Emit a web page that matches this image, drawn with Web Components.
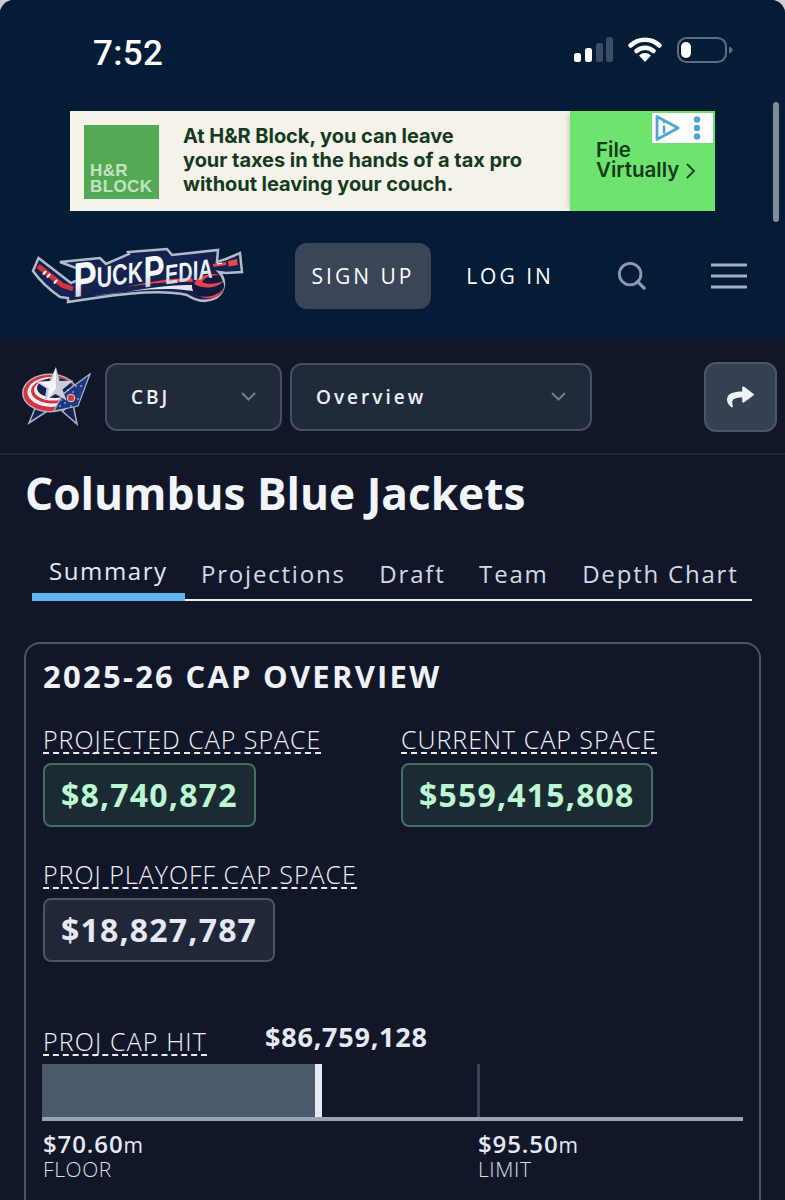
<!DOCTYPE html>
<html lang="en">
<head>
<meta charset="utf-8">
<title>Columbus Blue Jackets</title>
<style>
    html, body {
        margin: 0;
        height: 1200px;
        overflow: hidden;
        background: #c9ccd2;
    }
    body {
        font-family: "Open Sans", "Liberation Sans", sans-serif;
        color: #e5e9f2;
    }
    #app {
        display: block;
        height: 1200px;
        overflow: hidden;
        border-radius: 14px 14px 0 0;
        background: #111729;
    }
</style>
</head>
<body>
<div id="app">
    <top-section>
        <status-bar></status-bar>
        <ad-banner></ad-banner>
        <site-header></site-header>
    </top-section>
    <team-bar></team-bar>
    <team-title>Columbus Blue Jackets</team-title>
    <team-tabs></team-tabs>
    <cap-card>
        <cap-row>
            <cap-stat label="PROJECTED CAP SPACE" tone="good">$8,740,872</cap-stat>
            <cap-stat label="CURRENT CAP SPACE" tone="good">$559,415,808</cap-stat>
        </cap-row>
        <cap-row>
            <cap-stat label="PROJ PLAYOFF CAP SPACE">$18,827,787</cap-stat>
        </cap-row>
        <cap-meter></cap-meter>
    </cap-card>
</div>

<script>
const define = (name, html) => {
    customElements.define(name, class extends HTMLElement {
        constructor() {
            super();
            this.attachShadow({ mode: "open" }).innerHTML = html;
        }
    });
};

define("top-section", `
    <style>
    :host { display: block; position: relative; height: 338px; background: #041c36; }
    .scroll { position: absolute; left: 773px; top: 102px; width: 6px; height: 120px; border-radius: 3px; background: #7f8a9b; }
    </style>
    <slot></slot>
    <div class="scroll"></div>
`);

define("status-bar", `
    <style>
    :host { display: flex; height: 111px; box-sizing: border-box; padding: 34px 51px 0 93px; justify-content: space-between; align-items: flex-start; }
    .time { font: 500 35px/40px Roboto, sans-serif; color: #fff; letter-spacing: 0.3px; }
    svg { display: block; margin-top: 1px; }
    </style>
    <span class="time">7:52</span>
    <svg width="160" height="30" viewBox="574 37 160 30">
        <rect x="574" y="55" width="7" height="9" rx="2.5" fill="#fff"/>
        <rect x="585" y="50" width="7" height="14" rx="2.5" fill="#fff"/>
        <rect x="596" y="45" width="7" height="19" rx="2.5" fill="#3c4c62"/>
        <rect x="606" y="39" width="7" height="25" rx="2.5" fill="#3c4c62"/>
        <path d="M630.5 47.5a21 21 0 0 1 29 0" fill="none" stroke="#fff" stroke-width="4.5" stroke-linecap="round"/>
        <path d="M636.5 53a12.5 12.5 0 0 1 17 0" fill="none" stroke="#fff" stroke-width="4.5" stroke-linecap="round"/>
        <path d="M645 64l-6-6.5a8.5 8.5 0 0 1 12 0z" fill="#fff"/>
        <rect x="678" y="40" width="48" height="24" rx="8.5" fill="none" stroke="#5d6c83" stroke-width="2"/>
        <rect x="681" y="44" width="10" height="16" rx="5" fill="#fff"/>
        <path d="M729 48.5c2.5.8 3.5 2 3.5 3.5s-1 2.700-3.500 3.500z" fill="#5d6c83"/>
    </svg>
`);

define("ad-banner", `
    <style>
    :host { display: flex; position: relative; width: 645px; height: 100px; margin-left: 70px; background: #f5f2ea; color: #143a1e; font-family: Inter, sans-serif; }
    .logo { width: 75px; height: 74px; margin: 14px 24px 0 14px; box-sizing: border-box; padding: 0 0 4px 6px; background: #55a955; color: #c4e2c4; font: 700 17px/16px "Liberation Sans", sans-serif; letter-spacing: 0.4px; display: flex; flex-direction: column; justify-content: flex-end; }
    .copy { flex: 1; padding-top: 13px; font-size: 20px; font-weight: 700; line-height: 24px; letter-spacing: -0.05px; white-space: nowrap; }
    .cta { width: 145px; box-sizing: border-box; padding: 29px 0 0 26px; background: #6ce46e; box-shadow: -4px 0 5px -3px rgba(60, 50, 30, .25); font-size: 20.5px; font-weight: 600; line-height: 20px; white-space: nowrap; }
    .cta svg { margin-left: 7px; vertical-align: -2px; }
    .choice { position: absolute; right: 2px; top: 2px; width: 61px; height: 30px; background: #fff; display: flex; }
    </style>
    <div class="logo"><span>H&amp;R</span><span>BLOCK</span></div>
    <div class="copy">At H&amp;R Block, you can leave<br>your taxes in the hands of a tax pro<br>without leaving your couch.</div>
    <div class="cta">File<br>Virtually<svg width="9" height="16" viewBox="0 0 9 16"><path d="M1 1l7 7-7 7" fill="none" stroke="#143a1e" stroke-width="1.800"/></svg></div>
    <div class="choice">
        <svg width="61" height="30" viewBox="0 0 61 30">
            <path d="M5 3.500v23L26 15z" fill="none" stroke="#4fa5d0" stroke-width="2.800" stroke-linejoin="round"/>
            <path d="M12 12.500v8M12 8.500v1.800" fill="none" stroke="#4fa5d0" stroke-width="2.500"/>
            <circle cx="45" cy="6.500" r="3.200" fill="#4fa5d0"/><circle cx="45" cy="15" r="3.200" fill="#4fa5d0"/><circle cx="45" cy="23.500" r="3.200" fill="#4fa5d0"/>
        </svg>
    </div>
`);

define("site-header", `
    <style>
    :host { display: flex; align-items: center; height: 66px; margin-top: 32px; padding-left: 32px; color: #fff; }
    .brand { display: block; width: 211px; height: 56px; margin-right: 52px; flex: none; overflow: visible; }
    .btn { box-sizing: border-box; height: 66px; display: flex; align-items: center; justify-content: center; font-size: 21px; font-weight: 400; letter-spacing: 3px; border-radius: 12px; white-space: nowrap; }
    .signup { width: 136px; background: #3a4558; }
    .login { width: 86px; margin-left: 36px; }
    .search { margin-left: 65px; display: block; }
    .menu { margin-left: 65px; display: block; }
    </style>
    <svg class="brand" viewBox="32 248 211 56">
        <defs>
            <linearGradient id="steel" x1="0" y1="0" x2="0" y2="1">
                <stop offset="0" stop-color="#fff"/><stop offset=".6" stop-color="#f4f5f8"/><stop offset="1" stop-color="#aab2c0"/>
            </linearGradient>
        </defs>
        <path d="M33 271L38.500 258 71 283 78 280 79 269 60 262 100 258 106 264 129 254 128 252 167 249 172 255 218 250 217 262 226 259 240 253 242 272 226 273 219 272C226 279 226 291 216 298 206 303 196 301 187 295 170 291 140 291 95 298L68 302 68 298 60 297C50 290 40 281 33 271z" fill="#14224f" stroke="#b4bbc8" stroke-width="2.500" stroke-linejoin="miter"/>
        <path d="M38 266L62 285 73 289" fill="none" stroke="#d8323c" stroke-width="5"/>
        <path d="M46 271l-3 3.500M50 274l-3 3.500M57 280l-3 3.500" stroke="#fff" stroke-width="2"/>
        <path d="M213 264l13-2 .3 3-13 2zM228 261l9-2 .6 6-9 1.500z" fill="#e8474f"/>
        <path d="M217 264l5-.8" stroke="#fff" stroke-width="1.200"/>
        <path d="M92 296c32-2 66-12 100-11l1 6c-30-5-60 0-101 5z" fill="#e6e6ec"/>
        <path d="M126 287c22-5 44-9 66-9l1 4c-24-1-44 2-67 5z" fill="#e5424c"/>
        <ellipse cx="208" cy="286" rx="16" ry="12.500" fill="#0e1a3f"/>
        <path d="M194 284c2-6 10-10 20-10 2 0 4 .3 5 1-8 0-15 3-17 7 5 3 14 2 21-1-4 7-19 9-29 3zM199 296c8 2 18 0 24-7-1 7-13 13-24 7z" fill="#e5424c"/>
        <text transform="rotate(-8 75 297)" x="75" y="297" font-family="Liberation Sans, sans-serif" font-weight="700" font-style="italic" fill="url(#steel)" textLength="140" lengthAdjust="spacingAndGlyphs"><tspan font-size="48">P</tspan><tspan font-size="29" dy="-6">UCK</tspan><tspan font-size="43" dy="6">P</tspan><tspan font-size="27">EDIA</tspan></text>
    </svg>
    <span class="btn signup">SIGN UP</span>
    <span class="btn login">LOG IN</span>
    <svg class="search" width="28" height="28" viewBox="0 0 30 30"><circle cx="13" cy="13" r="11.500" fill="none" stroke="#8e9bb3" stroke-width="3"/><path d="M21 21l7 7" stroke="#8e9bb3" stroke-width="3.500" stroke-linecap="round"/></svg>
    <svg class="menu" width="36" height="26" viewBox="0 0 36 26"><path d="M0 2h36M0 13h36M0 24h36" stroke="#a3aec2" stroke-width="3"/></svg>
`);

define("team-select", `
    <style>
    :host { display: flex; box-sizing: border-box; height: 68px; align-items: center; justify-content: space-between; padding: 0 24px 0 24px; border: 2px solid #465063; border-radius: 12px; background: #212a3b; color: #eef1f6; font-size: 19px; font-weight: 600; letter-spacing: 3px; }
    svg { display: block; margin-bottom: 2px; }
    </style>
    <slot></slot>
    <svg width="15" height="9" viewBox="0 0 15 9"><path d="M1 1l6.500 6.500L14 1" fill="none" stroke="#6f7c91" stroke-width="2"/></svg>
`);

define("team-bar", `
    <style>
    :host { display: flex; box-sizing: border-box; height: 117px; padding: 24px 8px 0 22px; align-items: flex-start; border-bottom: 2px solid #1f2739; }
    .crest { display: block; width: 69px; height: 60px; margin: 4px 14px 0 0; flex: none; }
    .team { width: 177px; margin-top: 1px; }
    .view { width: 302px; margin: 1px 0 0 8px; }
    .share { display: flex; box-sizing: border-box; width: 73px; height: 70px; margin-left: auto; align-items: center; justify-content: center; background: #354052; border: 2px solid #4b5668; border-radius: 12px; }
    </style>
    <svg class="crest" viewBox="22 365 69 60">
        <path d="M36 405L29 422 46 411zM62 410L77 423 73 403z" fill="#14224f" stroke="#aeb6c4" stroke-width="1.500"/>
        <ellipse cx="50" cy="392" rx="28" ry="19.500" fill="#aeb6c4"/>
        <ellipse cx="50" cy="392" rx="26.500" ry="18" fill="#d7333d"/>
        <ellipse cx="51" cy="391" rx="23.500" ry="15" fill="#eef0f4"/>
        <ellipse cx="52" cy="390" rx="21" ry="12.500" fill="#d7333d"/>
        <ellipse cx="53" cy="389" rx="19" ry="10.500" fill="#eef0f4"/>
        <ellipse cx="55" cy="387" rx="18" ry="10" fill="#14224f"/>
        <path d="M90 373L78 405 54 410 62 394 72 386z" fill="#1c3a7d" stroke="#aeb6c4" stroke-width="1.200"/>
        <circle cx="71" cy="397" r="3.800" fill="#d7333d" stroke="#fff" stroke-width=".8"/>
        <path d="M65 402h.1M61 399h.1M68 389h.1M76 385h.1M81 385h.1M78 398h.1M60 405h.1M71 405h.1M73 391h.1" stroke="#dfe4ee" stroke-width="1.500" stroke-linecap="round"/>
        <path d="M56 366l3.500 14 14-.5-11 9 4 11-11-6.500-11 6.500 2-12-10-6.500 13-1z" fill="#c8cdd7"/>
        <path d="M56 366v21l-9 12.500 2-12-10-6.500 13-1z" fill="#f4f5f8"/>
    </svg>
    <team-select class="team">CBJ</team-select>
    <team-select class="view">Overview</team-select>
    <div class="share">
        <svg width="27" height="24" viewBox="0 0 512 512" preserveAspectRatio="none"><path fill="#eef1f6" d="M503.691 189.836L327.687 37.851C312.281 24.546 288 35.347 288 56.015v80.053C127.371 137.907 0 170.1 0 322.326c0 61.441 39.581 116.037 83.804 148.204 13.799 10.037 33.466-2.56 28.378-18.831-45.826-146.551 21.739-185.467 175.818-187.686V352c0 20.7 24.3 31.453 39.687 18.164l176.004-152c11.071-9.562 11.086-26.753 0-36.328z"/></svg>
    </div>
`);

define("team-title", `
    <style>
    :host { display: block; padding: 10px 0 0 25px; font-size: 44.200px; font-weight: 700; line-height: 56px; color: #f1f4f9; white-space: nowrap; }
    </style>
    <slot></slot>
`);

define("team-tabs", `
    <style>
    :host { display: flex; height: 54px; margin: 24px 33px 0 32px; border-bottom: 2px solid #e8ebf0; color: #d3d9e6; font-size: 24px; letter-spacing: 1.800px; }
    span { flex: none; padding: 11px 16.800px 0; line-height: 36px; white-space: nowrap; }
    span:last-child { padding-right: 0; }
    .on { box-sizing: border-box; width: 153px; height: 56px; padding: 8px 0 0 17px; margin-bottom: -2px; border-bottom: 8px solid #5fb6f5; color: #e5e9f2; letter-spacing: 1.600px; }
    .first { padding-left: 16px; }
    </style>
    <span class="on">Summary</span>
    <span class="first">Projections</span>
    <span>Draft</span>
    <span>Team</span>
    <span>Depth Chart</span>
`);

define("cap-card", `
    <style>
    :host { display: block; box-sizing: border-box; width: 737px; height: 640px; margin: 41px 0 0 24px; padding: 11px 17px 0; border: 2px solid #4b5563; border-radius: 16px; }
    h2 { margin: 0 0 -5px; font-size: 31px; font-weight: 700; line-height: 42px; letter-spacing: 2.250px; color: #eef1f6; white-space: nowrap; }
    </style>
    <h2>2025-26 CAP OVERVIEW</h2>
    <slot></slot>
`);

define("cap-row", `
    <style>
    :host { display: flex; margin-top: 36px; }
    ::slotted(cap-stat:first-child) { width: 358px; }
    </style>
    <slot></slot>
`);

customElements.define("cap-stat", class extends HTMLElement {
    constructor() {
        super();
        this.attachShadow({ mode: "open" }).innerHTML = `
            <style>
            :host { display: block; }
            .label { display: table; box-sizing: content-box; padding-bottom: 1px; font-size: 25px; font-weight: 300; line-height: 23px; letter-spacing: 1px; color: #f1f3f7; border-bottom: 2px dashed #e8ebf0; white-space: nowrap; }
            .pill { display: table; box-sizing: border-box; height: 64px; margin-top: 9px; padding: 0 16px; border: 2px solid #4b5563; border-radius: 8px; background: #1f2739; color: #e5e9f2; font-size: 32px; font-weight: 700; line-height: 60px; letter-spacing: 1.200px; }
            :host([tone="good"]) .pill { background: #1c2b33; border-color: #41705c; color: #bbf7d0; }
            </style>
            <div class="label"></div>
            <div class="pill"><slot></slot></div>
        `;
        this.shadowRoot.querySelector(".label").textContent = this.getAttribute("label");
    }
});

define("cap-meter", `
    <style>
    :host { display: block; margin: 57px 0 0 -1px; width: 701px; }
    .head { display: flex; align-items: flex-end; height: 37px; padding-left: 1px; }
    .label { padding-bottom: 1px; font-size: 25px; font-weight: 300; line-height: 23px; letter-spacing: 1.150px; color: #f1f3f7; border-bottom: 2px dashed #e8ebf0; white-space: nowrap; }
    .total { margin: 0 0 4px 58px; font-size: 27px; font-weight: 700; line-height: 30px; letter-spacing: 0.750px; color: #e5e9f2; }
    .bar { display: flex; height: 53px; margin-top: 8px; border-bottom: 4px solid #98a2b6; }
    .fill { width: 273px; background: #4c596c; }
    .now { width: 7px; background: #e5e9f2; }
    .limit { width: 3px; margin-left: 155px; background: #364257; }
    .ends { display: grid; grid-template-columns: 435px 1fr; margin: 9px 0 0 1px; }
    .num { font-size: 24px; font-weight: 600; line-height: 28px; letter-spacing: 0.900px; color: #e5e9f2; }
    .num small { font-size: 21px; font-weight: 400; }
    .cap { font-size: 21px; font-weight: 300; line-height: 20px; letter-spacing: 0.600px; color: #d9dee8; }
    </style>
    <div class="head"><span class="label">PROJ CAP HIT</span><span class="total">$86,759,128</span></div>
    <div class="bar"><div class="fill"></div><div class="now"></div><div class="limit"></div></div>
    <div class="ends">
        <div><div class="num">$70.60<small>m</small></div><div class="cap">FLOOR</div></div>
        <div><div class="num">$95.50<small>m</small></div><div class="cap">LIMIT</div></div>
    </div>
`);
</script>
</body>
</html>
